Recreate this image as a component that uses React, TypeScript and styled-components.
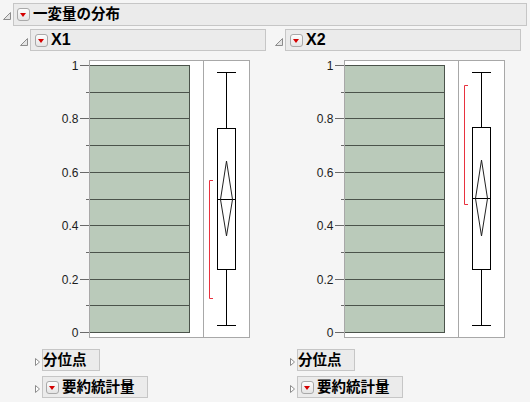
import React from "react";
import styled, { createGlobalStyle } from "styled-components";

const GlobalStyle = createGlobalStyle`
  html, body {
    margin: 0;
    padding: 0;
    background: #f5f5f5;
  }
  body {
    font-family: "Liberation Sans", "Noto Sans CJK JP", sans-serif;
    color: #000;
  }
`;

interface ColumnData {
    name: string;
    boxTop: number;
    boxBottom: number;
    median: number;
    diamondTop: number;
    diamondBottom: number;
    bracketTop: number;
    bracketBottom: number;
}

const columns: ColumnData[] = [
    { name: "X1", boxTop: 68, boxBottom: 209, median: 139, diamondTop: 101, diamondBottom: 176, bracketTop: 120, bracketBottom: 238 },
    { name: "X2", boxTop: 67, boxBottom: 209, median: 138, diamondTop: 100, diamondBottom: 176, bracketTop: 25, bracketBottom: 144 },
];

// y position of a value on the plot axis (svg coords)
const yOf = (v: number) => 5 + (1 - v) * 267;

const OpenTriangle = () => (
    <svg width="8" height="8" viewBox="0 0 8 8">
        <path d="M7.5 0.5 V7.5 H0.5 Z" fill="#e4e4e4" stroke="#8c8c8c" strokeWidth="1" />
    </svg>
);

const ClosedTriangle = () => (
    <svg width="5" height="8" viewBox="0 0 5 8">
        <path d="M0.5 0.5 L4.5 4 L0.5 7.5 Z" fill="#ffffff" stroke="#8c8c8c" strokeWidth="1" />
    </svg>
);

const Plot: React.FC<{ data: ColumnData }> = ({ data }) => {
    const ticks = Array.from({ length: 11 }, (_, i) => i / 10);
    const cx = 206.5;
    const dMid = data.median;
    return (
        <PlotSvg width="235" height="278" viewBox="0 0 235 278">
            <rect x="69.5" y="0.5" width="160" height="277" fill="#ffffff" stroke="#a8a8a8" />
            <line x1="183.5" y1="0.5" x2="183.5" y2="277.5" stroke="#a8a8a8" />
            <rect x="70" y={yOf(1)} width="99.5" height={yOf(0) - yOf(1)} fill="#bacaba" />
            {ticks.map((t) => {
                const y = Math.round(yOf(t)) + 0.5;
                const major = Math.round(t * 10) % 2 === 0;
                return (
                    <g key={t}>
                        <line x1="70" y1={y} x2="170" y2={y} stroke="#4b534b" />
                        <line x1={major ? 60 : 66} y1={y} x2="69" y2={y} stroke="#6a6a6a" />
                        {major && (
                            <AxisLabel x="58.5" y={y + 4} textAnchor="end">
                                {t === 0 ? "0" : t === 1 ? "1" : t.toFixed(1)}
                            </AxisLabel>
                        )}
                    </g>
                );
            })}
            <line x1="169.5" y1={yOf(1)} x2="169.5" y2={yOf(0) + 1} stroke="#4b534b" />
            <path
                d={`M193 ${data.bracketTop + 0.5} H189.5 V${data.bracketBottom + 0.5} H193`}
                fill="none"
                stroke="#e8323f"
            />
            <line x1={cx} y1="12.5" x2={cx} y2={data.boxTop + 0.5} stroke="#000" />
            <line x1="197" y1="12.5" x2="216" y2="12.5" stroke="#000" />
            <line x1={cx} y1={data.boxBottom + 0.5} x2={cx} y2="265.5" stroke="#000" />
            <line x1="197" y1="265.5" x2="216" y2="265.5" stroke="#000" />
            <rect x="197.5" y={data.boxTop + 0.5} width="18" height={data.boxBottom - data.boxTop} fill="#ffffff" stroke="#000" />
            <line x1="197" y1={data.median + 0.5} x2="216" y2={data.median + 0.5} stroke="#000" />
            <path
                d={`M${cx} ${data.diamondTop} L212.5 ${dMid + 0.5} L${cx} ${data.diamondBottom} L200.5 ${dMid + 0.5} Z`}
                fill="none"
                stroke="#222"
                strokeWidth="1"
            />
        </PlotSvg>
    );
};

const App: React.FC = () => {
    return (
        <Page>
            <GlobalStyle />
            <HeaderRow>
                <Disclosure width={10}><OpenTriangle /></Disclosure>
                <HeaderBox width={514} height={23} pad={3}>
                    <MenuButton />
                    <Title>一変量の分布</Title>
                </HeaderBox>
            </HeaderRow>
            <Columns>
                {columns.map((c) => (
                    <Column key={c.name}>
                        <HeaderRow>
                            <Disclosure width={10}><OpenTriangle /></Disclosure>
                            <HeaderBox width={236} height={22} pad={4}>
                                <MenuButton />
                                <Title size={16}>{c.name}</Title>
                            </HeaderBox>
                        </HeaderRow>
                        <Plot data={c} />
                        <SubList>
                            <SubRow>
                                <Disclosure width={7}><ClosedTriangle /></Disclosure>
                                <SubBox>
                                    <Title>分位点</Title>
                                </SubBox>
                            </SubRow>
                            <SubRow>
                                <Disclosure width={7}><ClosedTriangle /></Disclosure>
                                <SubBox withMenu>
                                    <MenuButton />
                                    <Title>要約統計量</Title>
                                </SubBox>
                            </SubRow>
                        </SubList>
                    </Column>
                ))}
            </Columns>
        </Page>
    );
};

const Page = styled.div`
    padding: 3px 0 0 3px;
    width: 527px;
    height: 399px;
    overflow: hidden;
`;

const HeaderRow = styled.div`
    display: flex;
    align-items: center;
`;

const Disclosure = styled.span<{ width: number }>`
    display: flex;
    width: ${(p) => p.width}px;
    margin-top: 3px;
    svg {
        display: block;
    }
`;

const HeaderBox = styled.div<{ width: number; height: number; pad: number }>`
    display: flex;
    align-items: center;
    gap: 3px;
    box-sizing: border-box;
    width: ${(p) => p.width}px;
    height: ${(p) => p.height}px;
    padding-left: ${(p) => p.pad}px;
    background: #ebebeb;
    border: 1px solid #c6c6c6;
`;

const MenuButton = styled.span`
    position: relative;
    box-sizing: border-box;
    flex: none;
    width: 13px;
    height: 13px;
    border: 1px solid #a9a9a9;
    border-radius: 3px;
    background: linear-gradient(#fdfdfd, #e4e4e4);
    &::after {
        content: "";
        position: absolute;
        left: 2px;
        top: 4px;
        border-left: 3.5px solid transparent;
        border-right: 3.5px solid transparent;
        border-top: 4px solid #d40000;
    }
`;

const Title = styled.span<{ size?: number }>`
    font-family: "Liberation Sans", "Noto Sans CJK JP", sans-serif;
    font-weight: bold;
    font-size: ${(p) => p.size ?? 14.5}px;
    line-height: 1;
    white-space: nowrap;
`;

const Columns = styled.div`
    display: flex;
    margin: 3px 0 0 17px;
`;

const Column = styled.div`
    display: flex;
    flex-direction: column;
    width: 255px;
`;

const PlotSvg = styled.svg`
    display: block;
    margin-top: 9px;
`;

const AxisLabel = styled.text`
    font-family: "Liberation Sans", sans-serif;
    font-size: 12px;
    fill: #1c1c1c;
`;

const SubList = styled.div`
    display: flex;
    flex-direction: column;
    gap: 5px;
    margin-top: 11px;
    padding-left: 15px;
`;

const SubRow = styled.div`
    display: flex;
    align-items: center;
`;

const SubBox = styled.div<{ withMenu?: boolean }>`
    display: flex;
    align-items: center;
    gap: 3px;
    box-sizing: border-box;
    height: 22px;
    padding: 0 12px 0 ${(p) => (p.withMenu ? 3 : 0)}px;
    background: #ebebeb;
    border: 1px solid #c6c6c6;
`;

export default App;
